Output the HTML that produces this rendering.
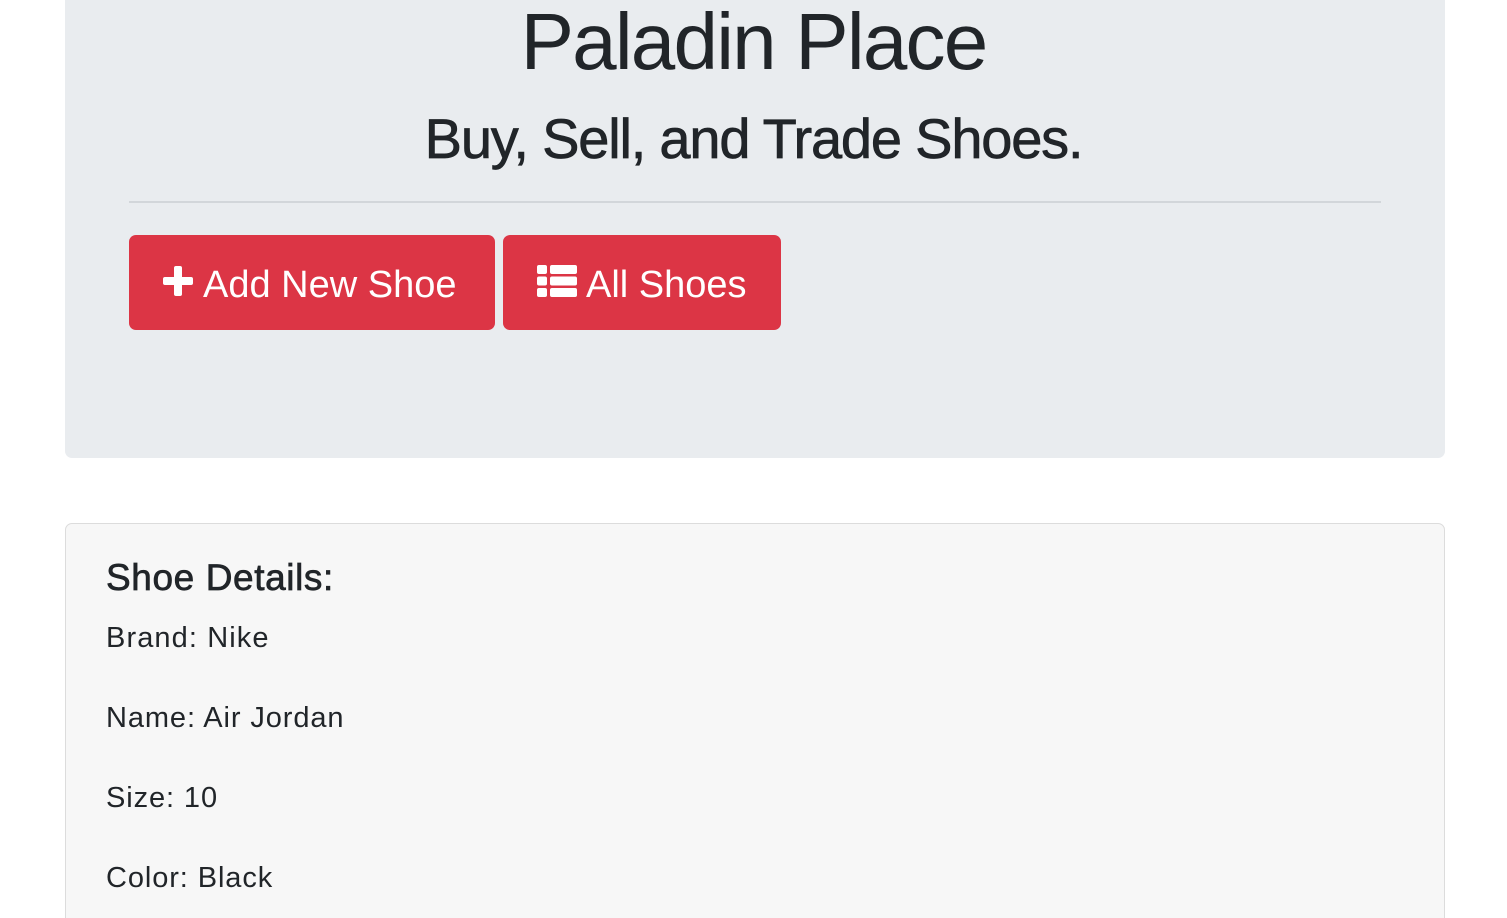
<!DOCTYPE html>
<html><head><meta charset="utf-8"><style>
html,body{margin:0;width:1507px;height:918px;overflow:hidden}
body{background:#fff;font-family:"Liberation Sans",sans-serif;color:#212529;position:relative}
.a{position:absolute;line-height:1;white-space:nowrap}
.jum{position:absolute;left:65px;top:-20px;width:1380px;height:478px;background:#e9ecef;border-radius:7px}
.hr{position:absolute;left:129px;top:201px;width:1252px;height:2px;background:#d2d6da}
.btn{position:absolute;top:235px;height:95px;background:#dc3545;border-radius:7px;color:#fff}
.card{position:absolute;left:65px;top:523px;width:1378px;height:420px;background:#f7f7f7;border:1px solid #dcdcdc;border-radius:7px}
.m{-webkit-text-stroke:0.7px currentColor}
</style></head><body>
<div class="jum"></div>
<div class="a" style="left:0;width:1507px;text-align:center;top:2px;font-size:80px;letter-spacing:-1.8px">Paladin Place</div>
<div class="a m" style="left:0;width:1507px;text-align:center;top:111px;font-size:56px;letter-spacing:-1.2px">Buy, Sell, and Trade Shoes.</div>
<div class="hr"></div>
<div class="btn" style="left:129px;width:366px"></div>
<div class="btn" style="left:503px;width:278px"></div>
<svg class="a" style="left:162px;top:265px" width="32" height="32" viewBox="0 0 32 32"><rect x="12" y="1" width="8" height="30" rx="2" fill="#fff"/><rect x="1" y="12" width="30" height="8" rx="2" fill="#fff"/></svg>
<div class="a" style="left:203px;top:266px;font-size:38px;color:#fff">Add New Shoe</div>
<svg class="a" style="left:537px;top:265px" width="40" height="32" viewBox="0 0 40 32"><g fill="#fff"><rect x="0" y="0" width="10" height="9" rx="2"/><rect x="0" y="11.5" width="10" height="9" rx="2"/><rect x="0" y="23" width="10" height="9" rx="2"/><rect x="13" y="0" width="27" height="9" rx="2"/><rect x="13" y="11.5" width="27" height="9" rx="2"/><rect x="13" y="23" width="27" height="9" rx="2"/></g></svg>
<div class="a" style="left:586px;top:266px;font-size:38px;color:#fff">All Shoes</div>
<div class="card"></div>
<div class="a m" style="left:106px;top:559px;font-size:37px;letter-spacing:0.6px">Shoe Details:</div>
<div class="a" style="left:106px;top:624px;font-size:29px;letter-spacing:1.1px">Brand: Nike</div>
<div class="a" style="left:106px;top:704px;font-size:29px;letter-spacing:0.9px">Name: Air Jordan</div>
<div class="a" style="left:106px;top:784px;font-size:29px;letter-spacing:0.9px">Size: 10</div>
<div class="a" style="left:106px;top:864px;font-size:29px;letter-spacing:0.9px">Color: Black</div>
</body></html>
